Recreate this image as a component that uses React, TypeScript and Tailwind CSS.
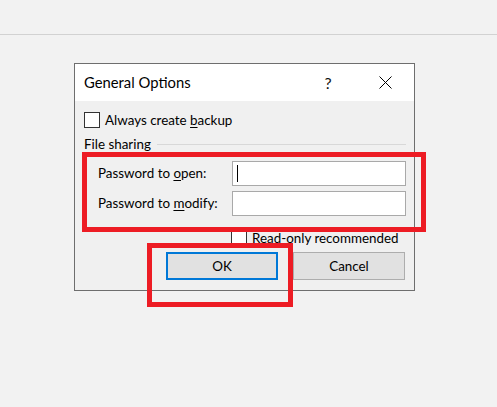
import React from "react";

function CheckBox() {
  return <div className="h-[16px] w-[16px] shrink-0 border border-[#333333] bg-white" />;
}

export default function App() {
  return (
    <div
      className="relative min-h-screen bg-[#f2f2f2] text-black"
      style={{ fontFamily: 'Lato, "Noto Sans", sans-serif' }}
    >
      <div className="h-[35px] border-b border-[#d2d2d2]" />

      {/* dialog */}
      <div className="ml-[74px] mt-[28px] w-[341px] border border-[#6e6e6e] bg-[#f0f0f0]">
        <div className="flex h-[37px] items-center bg-white pl-[9px] pr-[6px]">
          <span className="text-[14.8px]">General Options</span>
          <div className="ml-auto flex w-[46px] justify-center text-[16px] text-[#111]">?</div>
          <div className="ml-[11px] flex w-[46px] items-center justify-center">
            <svg width="13" height="13" viewBox="0 0 13 13">
              <path d="M0.5 0.5L12.5 12.5M12.5 0.5L0.5 12.5" stroke="#000" strokeWidth="1" fill="none" />
            </svg>
          </div>
        </div>

        <div className="pb-[10px] pr-[8px] text-[13.4px]">
          <div className="mt-[11px] flex h-[16px] items-center pl-[9px]">
            <CheckBox />
            <span className="ml-[5px] whitespace-nowrap">
              Always create <span className="underline underline-offset-2">b</span>ackup
            </span>
          </div>

          <div className="mt-[7px] flex h-[18px] items-center pl-[9px]">
            <span className="whitespace-nowrap">File sharing</span>
            <div className="ml-[6px] h-px flex-1 bg-[#d8d8d8]" />
          </div>

          <div className="mt-[8px] flex h-[25px] items-center pl-[23px]">
            <span className="whitespace-nowrap">
              Password to <span className="underline underline-offset-2">o</span>pen:
            </span>
            <div className="ml-auto flex h-[25px] w-[174px] items-center border border-[#a9a9a9] bg-white pl-[4px]">
              <div className="h-[17px] w-px bg-black" />
            </div>
          </div>

          <div className="mt-[5px] flex h-[25px] items-center pl-[23px]">
            <span className="whitespace-nowrap">
              Password to <span className="underline underline-offset-2">m</span>odify:
            </span>
            <div className="ml-auto h-[25px] w-[174px] border border-[#a9a9a9] bg-white" />
          </div>

          <div className="mt-[14px] flex h-[16px] items-center pl-[156px]">
            <CheckBox />
            <span className="ml-[5px] whitespace-nowrap">Read-only recommended</span>
          </div>

          <div className="mt-[6px] flex justify-end gap-[15px] pr-px">
            <button className="flex h-[28px] w-[112px] items-center justify-center border-2 border-[#0078d7] bg-[#e1e1e1]">
              OK
            </button>
            <button className="flex h-[28px] w-[112px] items-center justify-center border border-[#adadad] bg-[#e1e1e1]">
              Cancel
            </button>
          </div>
        </div>
      </div>

      {/* annotation boxes */}
      <div className="absolute left-[82px] top-[152px] h-[80px] w-[344px] border-[5px] border-[#ed1c24]" />
      <div className="absolute left-[147px] top-[243px] h-[64px] w-[146px] border-[5px] border-[#ed1c24]" />
    </div>
  );
}
